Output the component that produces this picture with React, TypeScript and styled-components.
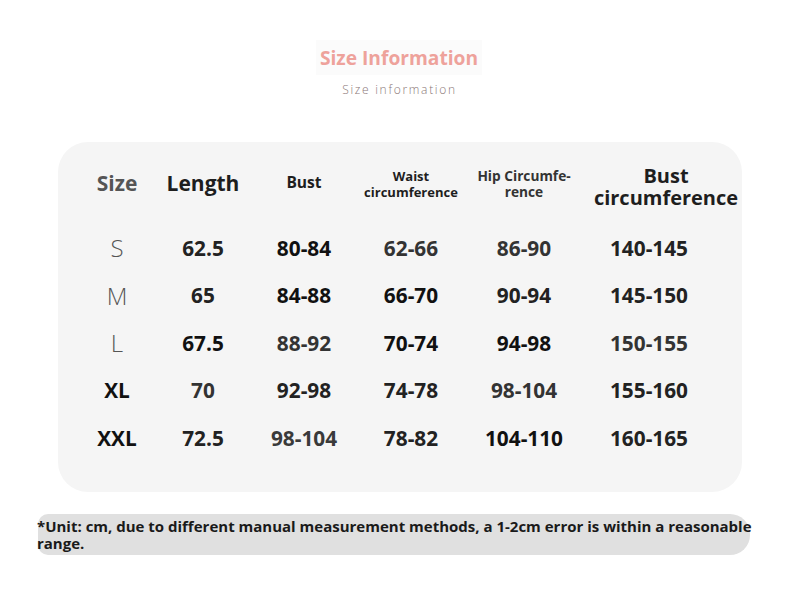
import React from "react";
import styled, { createGlobalStyle } from "styled-components";

const Global = createGlobalStyle`
  html, body { margin: 0; padding: 0; background: #ffffff; }
  body { font-family: "Open Sans", "Noto Sans", "Liberation Sans", sans-serif; }
  * { box-sizing: border-box; }
`;

const Page = styled.div`
  width: 790px;
  height: 609px;
  display: flex;
  flex-direction: column;
  align-items: center;
  padding-top: 40px;
  overflow: hidden;
`;

const TitleBox = styled.div`
  height: 35px;
  margin-left: 8px;
  padding: 0 4px;
  display: flex;
  align-items: center;
  background: #fbfbfb;
  color: #eea29b;
  font-size: 19.2px;
  font-weight: 700;
`;

const Subtitle = styled.div`
  margin-top: 7px;
  margin-left: 9px;
  height: 16px;
  line-height: 16px;
  font-size: 12px;
  font-weight: 300;
  letter-spacing: 1.7px;
  color: #8a7676;
`;

const Panel = styled.div`
  margin-top: 44px;
  width: 684px;
  height: 350px;
  margin-left: 10px;
  background: #f5f5f5;
  border-radius: 30px;
  padding: 11px 0 0 20px;
`;

const Grid = styled.div`
  display: grid;
  grid-template-columns: 78px 94px 108px 106px 120px 164px;
  grid-template-rows: 60px 11px repeat(5, 47.5px);
`;

const HeadCell = styled.div<{ $size: number; $color?: string; $lh?: number; $down?: number }>`
  grid-row: 1;
  display: flex;
  align-items: center;
  justify-content: center;
  text-align: center;
  padding-top: ${(p) => p.$down ?? 0}px;
  font-weight: 700;
  font-size: ${(p) => p.$size}px;
  line-height: ${(p) => p.$lh ?? 1.15};
  color: ${(p) => p.$color ?? "#1e1e1e"};
`;

const Cell = styled.div<{ $row: number; $thin?: boolean; $color?: string; $last?: boolean }>`
  grid-row: ${(p) => p.$row + 2};
  display: flex;
  align-items: center;
  justify-content: center;
  padding-right: ${(p) => (p.$last ? 34 : 0)}px;
  font-size: ${(p) => (p.$thin ? 24 : 20.8)}px;
  font-weight: ${(p) => (p.$thin ? 300 : 700)};
  color: ${(p) => p.$color ?? (p.$thin ? "#555" : "#1a1a1a")};
`;

const Note = styled.div`
  margin-top: 22px;
  align-self: flex-start;
  margin-left: 38px;
  width: 712px;
  height: 41px;
  background: #e0e0e0;
  border-radius: 10px 20px 20px 10px;
  display: flex;
  align-items: center;
`;

const NoteText = styled.div`
  margin-left: -1px;
  width: 745px;
  flex-shrink: 0;
  font-size: 15px;
  font-weight: 700;
  line-height: 17px;
  color: #1a1a1a;
`;

type Row = { size: string; thin: boolean; vals: string[]; colors: string[] };

const rows: Row[] = [
  { size: "S", thin: true, vals: ["62.5", "80-84", "62-66", "86-90", "140-145"], colors: ["#222", "#111", "#333", "#333", "#222"] },
  { size: "M", thin: true, vals: ["65", "84-88", "66-70", "90-94", "145-150"], colors: ["#222", "#111", "#111", "#222", "#222"] },
  { size: "L", thin: true, vals: ["67.5", "88-92", "70-74", "94-98", "150-155"], colors: ["#111", "#333", "#111", "#111", "#333"] },
  { size: "XL", thin: false, vals: ["70", "92-98", "74-78", "98-104", "155-160"], colors: ["#333", "#222", "#222", "#333", "#222"] },
  { size: "XXL", thin: false, vals: ["72.5", "98-104", "78-82", "104-110", "160-165"], colors: ["#222", "#3a3a3a", "#222", "#111", "#222"] },
];

export default function App() {
  return (
    <>
      <Global />
      <Page>
        <TitleBox>Size Information</TitleBox>
        <Subtitle>Size information</Subtitle>
        <Panel>
          <Grid>
            <HeadCell $size={21} $color="#555">Size</HeadCell>
            <HeadCell $size={21}>Length</HeadCell>
            <HeadCell $size={15.6}>Bust</HeadCell>
            <HeadCell $size={13} $lh={1.2} $down={4}>
              Waist
              <br />
              circumference
            </HeadCell>
            <HeadCell $size={13.7} $color="#333" $lh={1.2} $down={2}>
              Hip Circumfe-
              <br />
              rence
            </HeadCell>
            <HeadCell $size={20} $lh={1.12} $down={8}>
              Bust
              <br />
              circumference
            </HeadCell>
            {rows.map((r, i) => (
              <React.Fragment key={r.size}>
                <Cell $row={i + 1} $thin={r.thin} $color={r.thin ? undefined : "#111"}>
                  {r.size}
                </Cell>
                {r.vals.map((v, j) => (
                  <Cell key={j} $row={i + 1} $color={r.colors[j]} $last={j === 4}>
                    {v}
                  </Cell>
                ))}
              </React.Fragment>
            ))}
          </Grid>
        </Panel>
        <Note>
          <NoteText>
            *Unit: cm, due to different manual measurement methods, a 1-2cm error is within a reasonable range.
          </NoteText>
        </Note>
      </Page>
    </>
  );
}
